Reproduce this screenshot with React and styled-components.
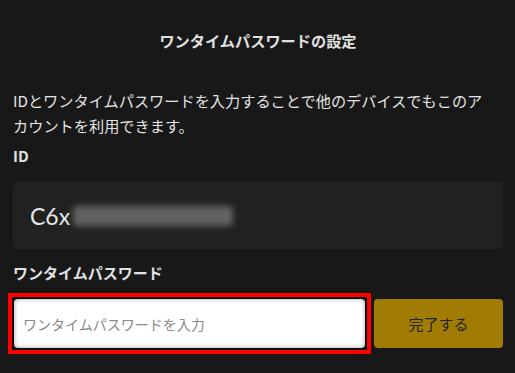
import styled, { createGlobalStyle } from 'styled-components';

const GlobalStyle = createGlobalStyle`
  html, body {
    margin: 0;
    padding: 0;
    background: #181818;
  }
  body {
    font-family: "Noto Sans CJK JP", "Noto Sans", sans-serif;
    color: #e2e2e2;
  }
`;

const Page = styled.div`
  display: flex;
  flex-direction: column;
  padding: 0 12px 0 13px;
  min-height: 373px;
  box-sizing: border-box;
`;

const Title = styled.h1`
  margin: 29px 0 0;
  font-size: 15.2px;
  line-height: 22px;
  font-weight: 700;
  text-align: center;
  color: #e0e0e0;
`;

const Lead = styled.p`
  margin: 37px 0 0;
  max-width: 480px;
  font-size: 15.2px;
  line-height: 25px;
  color: #e4e4e4;
`;

const Label = styled.label`
  display: block;
  margin-top: ${(p) => p.$top}px;
  font-size: 15px;
  line-height: 22px;
  font-weight: 700;
  color: #e2e2e2;
`;

const IdBox = styled.div`
  margin-top: 15px;
  height: 67px;
  display: flex;
  align-items: center;
  padding-left: 17px;
  background: #212121;
  border-radius: 4px;
  font-family: Lato, "Noto Sans", sans-serif;
  font-size: 23px;
  color: #e6e6e6;
`;

const Masked = styled.span`
  display: inline-block;
  width: 160px;
  height: 20px;
  margin-left: 3px;
  background: #626262;
  border-radius: 3px;
  filter: blur(3px);
`;

const Row = styled.div`
  margin-top: 15px;
  display: flex;
  align-items: center;
  gap: 3px;
`;

const Frame = styled.div`
  flex: 1;
  display: flex;
  margin: -6px 0 -6px -5px;
  padding: 2px;
  border: 4px solid #ff0000;
  background: #0a0a0a;
`;

const Input = styled.input`
  flex: 1;
  min-width: 0;
  height: 49px;
  box-sizing: border-box;
  border: none;
  border-radius: 4px;
  padding: 0 9px;
  background: #fff;
  font-family: "Noto Sans CJK JP", sans-serif;
  font-size: 14px;
  color: #333;
  outline: none;
  box-shadow: inset 0 0 5px rgba(0, 0, 0, 0.35);

  &::placeholder {
    color: #8a8a8a;
  }
`;

const Submit = styled.button`
  width: 129px;
  height: 49px;
  border: none;
  border-radius: 4px;
  background: #a07c05;
  color: #25231f;
  font-family: "Noto Sans CJK JP", sans-serif;
  font-size: 15px;
  cursor: pointer;
`;

export default function App() {
  return (
    <>
      <GlobalStyle />
      <Page>
        <Title>ワンタイムパスワードの設定</Title>
        <Lead>IDとワンタイムパスワードを入力することで他のデバイスでもこのアカウントを利用できます。</Lead>
        <Label $top={7}>ID</Label>
        <IdBox>
          C6x<Masked />
        </IdBox>
        <Label $top={13}>ワンタイムパスワード</Label>
        <Row>
          <Frame>
            <Input placeholder="ワンタイムパスワードを入力" />
          </Frame>
          <Submit>完了する</Submit>
        </Row>
      </Page>
    </>
  );
}
